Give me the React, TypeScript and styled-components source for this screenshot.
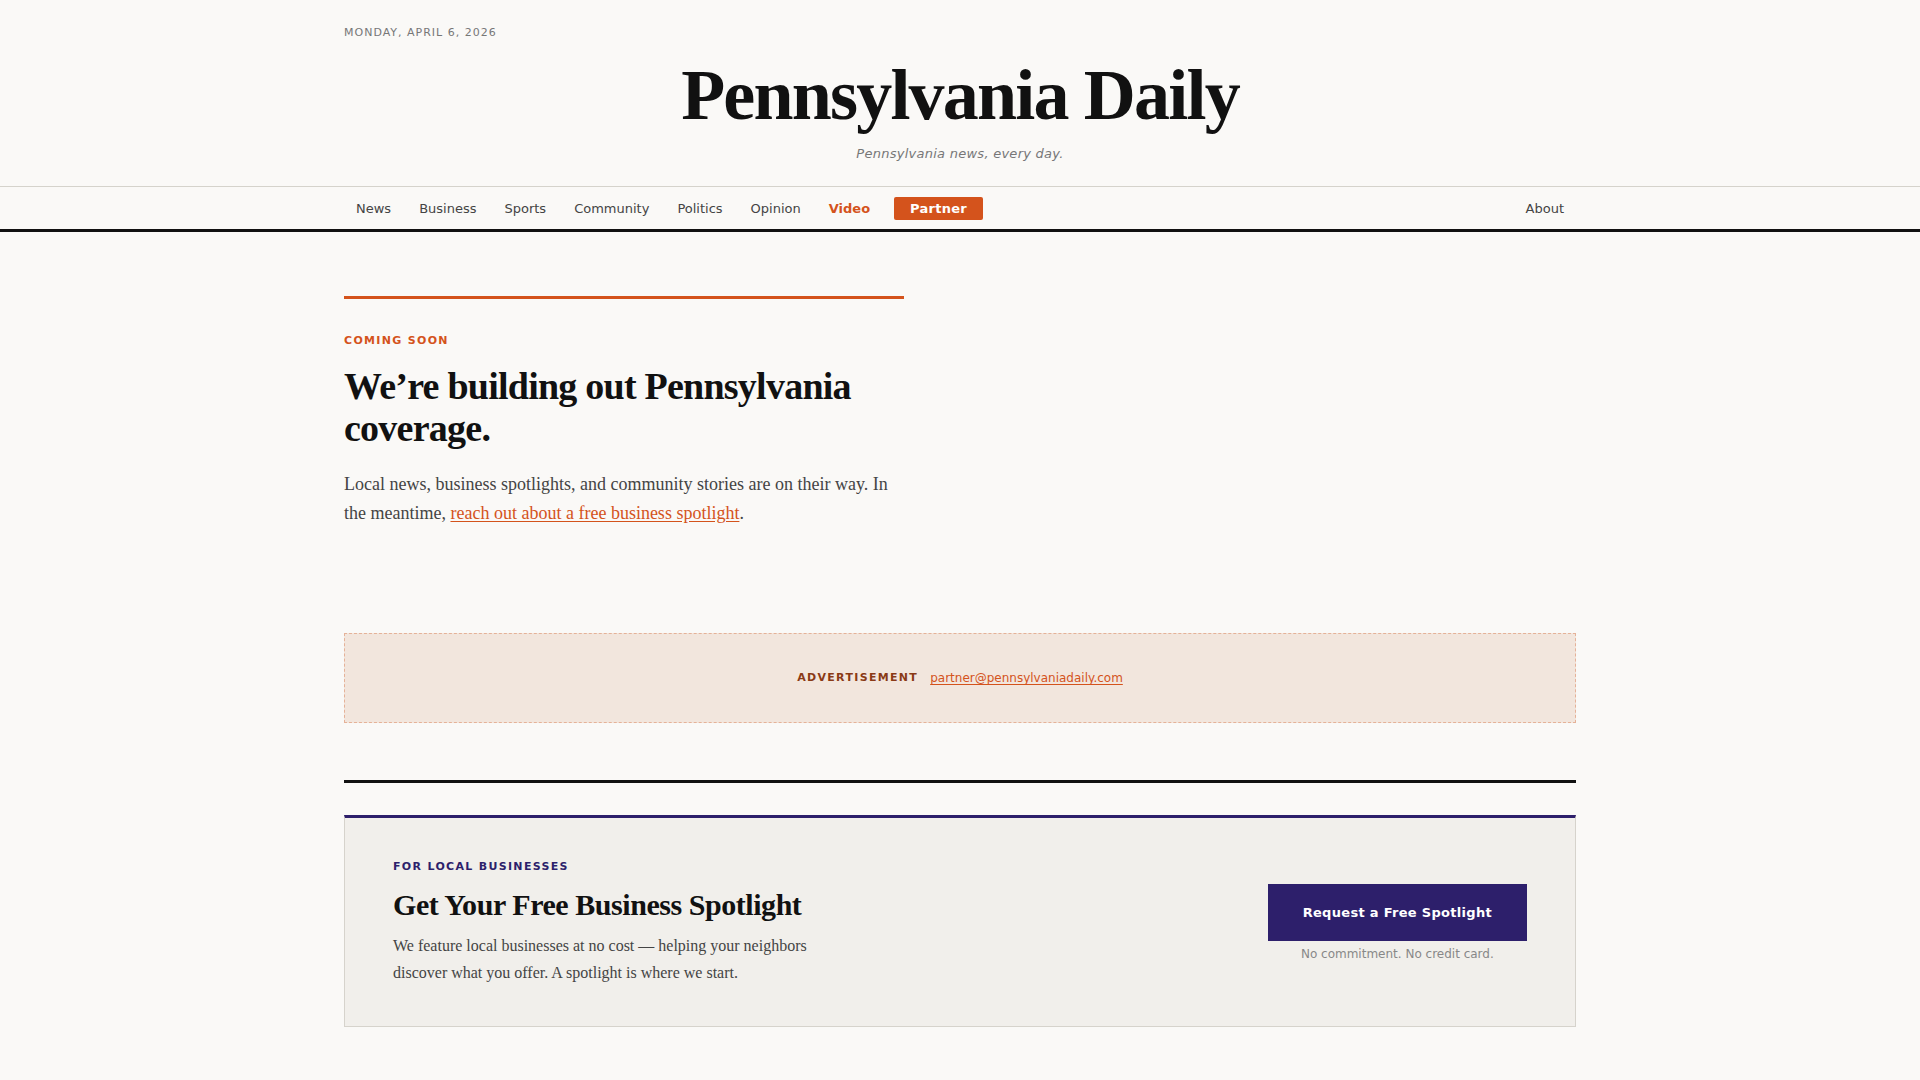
import React from "react";
import styled, { createGlobalStyle } from "styled-components";

const SANS = `"DejaVu Sans", Verdana, sans-serif`;
const SERIF = `"Liberation Serif", "Times New Roman", serif`;
const ORANGE = "#d4531c";
const NAVY = "#2d1f6b";
const INK = "#111111";

const GlobalStyle = createGlobalStyle`
  * { box-sizing: border-box; }
  html, body { margin: 0; padding: 0; }
  body {
    background: #faf9f7;
    color: ${INK};
    font-family: ${SANS};
  }
`;

const Container = styled.div`
  max-width: 1280px;
  margin: 0 auto;
  padding: 0 24px;
`;

const Masthead = styled.header`
  padding: 25px 0 24px;
`;

const DateLine = styled.div`
  font-family: ${SANS};
  font-size: 11px;
  line-height: 16px;
  letter-spacing: 1px;
  text-transform: uppercase;
  color: #777;
`;

const Title = styled.h1`
  margin: 18px 0 0;
  text-align: center;
  font-family: ${SERIF};
  font-weight: 700;
  font-size: 72px;
  line-height: 1;
  letter-spacing: -0.025em;
  color: ${INK};
`;

const Tagline = styled.p`
  margin: 15px 0 0;
  text-align: center;
  font-family: ${SANS};
  font-style: italic;
  font-size: 13px;
  line-height: 16px;
  letter-spacing: 0.02em;
  color: #777;
`;

const NavBar = styled.nav`
  border-top: 1px solid #d5d3cc;
  border-bottom: 3px solid ${INK};
`;

const NavInner = styled(Container)`
  display: flex;
  align-items: center;
  gap: 4px;
  height: 42px;
  padding-top: 2px;
`;

const NavLink = styled.a<{ $accent?: boolean; $push?: boolean }>`
  padding: 0 12px;
  font-family: ${SANS};
  font-size: 13px;
  line-height: 16px;
  text-decoration: none;
  color: ${(p) => (p.$accent ? ORANGE : "#444")};
  font-weight: ${(p) => (p.$accent ? 700 : 400)};
  margin-left: ${(p) => (p.$push ? "auto" : "0")};
  cursor: pointer;
`;

const PartnerPill = styled.a`
  margin: 0 0 2px 8px;
  padding: 4px 16px;
  background: ${ORANGE};
  color: #fff;
  border-radius: 2px;
  font-family: ${SANS};
  font-weight: 700;
  font-size: 13px;
  line-height: 15px;
  letter-spacing: 0.02em;
  text-decoration: none;
`;

const Main = styled(Container)`
  padding-top: 64px;
  padding-bottom: 54px;
`;

const Hero = styled.section`
  max-width: 560px;
  border-top: 3px solid ${ORANGE};
  padding-top: 34px;
`;

const Kicker = styled.div<{ $color: string }>`
  font-family: ${SANS};
  font-weight: 700;
  font-size: 11px;
  line-height: 16px;
  letter-spacing: 0.12em;
  text-transform: uppercase;
  color: ${(p) => p.$color};
`;

const Headline = styled.h2`
  margin: 16px 0 0;
  font-family: ${SERIF};
  font-weight: 700;
  font-size: 38px;
  line-height: 42px;
  letter-spacing: -0.02em;
  color: ${INK};
`;

const Lede = styled.p`
  margin: 21px 0 0;
  font-family: ${SERIF};
  font-size: 18px;
  line-height: 29px;
  color: #444;
`;

const InlineLink = styled.a`
  color: ${ORANGE};
  text-decoration: underline;
  text-underline-offset: 2px;
`;

const AdSlot = styled.aside`
  margin-top: 105px;
  height: 90px;
  display: flex;
  align-items: center;
  justify-content: center;
  gap: 12px;
  background: #f2e6dd;
  border: 1px dashed #e5b298;
`;

const AdEmail = styled.a`
  font-family: ${SANS};
  font-size: 12px;
  line-height: 16px;
  color: ${ORANGE};
  text-decoration: underline;
  text-underline-offset: 2px;
`;

const Rule = styled.hr`
  margin: 57px 0 0;
  border: 0;
  height: 3px;
  background: ${INK};
`;

const Spotlight = styled.section`
  margin-top: 32px;
  display: flex;
  align-items: center;
  justify-content: space-between;
  padding: 41px 48px 40px;
  background: #f1efeb;
  border: 1px solid #d6d3cc;
  border-top: 3px solid ${NAVY};
`;

const SpotlightText = styled.div`
  display: flex;
  flex-direction: column;
`;

const SpotlightHeading = styled.h3`
  margin: 12px 0 0;
  font-family: ${SERIF};
  font-weight: 700;
  font-size: 30px;
  line-height: 36px;
  letter-spacing: -0.015em;
  color: ${INK};
`;

const SpotlightBody = styled.p`
  margin: 9px 0 0;
  max-width: 440px;
  font-family: ${SERIF};
  font-size: 16px;
  line-height: 27.2px;
  color: #444;
`;

const CtaColumn = styled.div`
  display: flex;
  flex-direction: column;
  align-items: center;
`;

const CtaButton = styled.a`
  display: block;
  padding: 20px 35px;
  background: ${NAVY};
  color: #fff;
  font-family: ${SANS};
  font-weight: 700;
  font-size: 13px;
  line-height: 17px;
  letter-spacing: 0.3px;
  text-decoration: none;
  cursor: pointer;
`;

const CtaNote = styled.div`
  margin-top: 5px;
  font-family: ${SANS};
  font-size: 12px;
  line-height: 16px;
  color: #888;
`;

const navItems = ["News", "Business", "Sports", "Community", "Politics", "Opinion"];

export default function App() {
  return (
    <>
      <GlobalStyle />
      <Masthead>
        <Container>
          <DateLine>Monday, April 6, 2026</DateLine>
          <Title>Pennsylvania Daily</Title>
          <Tagline>Pennsylvania news, every day.</Tagline>
        </Container>
      </Masthead>
      <NavBar>
        <NavInner>
          {navItems.map((n) => (
            <NavLink key={n}>{n}</NavLink>
          ))}
          <NavLink $accent>Video</NavLink>
          <PartnerPill>Partner</PartnerPill>
          <NavLink $push>About</NavLink>
        </NavInner>
      </NavBar>
      <Main>
        <Hero>
          <Kicker $color={ORANGE}>Coming soon</Kicker>
          <Headline>We’re building out Pennsylvania coverage.</Headline>
          <Lede>
            Local news, business spotlights, and community stories are on their way. In the
            meantime, <InlineLink>reach out about a free business spotlight</InlineLink>.
          </Lede>
        </Hero>
        <AdSlot>
          <Kicker $color="#8a3a16">Advertisement</Kicker>
          <AdEmail>partner@pennsylvaniadaily.com</AdEmail>
        </AdSlot>
        <Rule />
        <Spotlight>
          <SpotlightText>
            <Kicker $color={NAVY}>For local businesses</Kicker>
            <SpotlightHeading>Get Your Free Business Spotlight</SpotlightHeading>
            <SpotlightBody>
              We feature local businesses at no cost — helping your neighbors discover what you
              offer. A spotlight is where we start.
            </SpotlightBody>
          </SpotlightText>
          <CtaColumn>
            <CtaButton>Request a Free Spotlight</CtaButton>
            <CtaNote>No commitment. No credit card.</CtaNote>
          </CtaColumn>
        </Spotlight>
      </Main>
    </>
  );
}
